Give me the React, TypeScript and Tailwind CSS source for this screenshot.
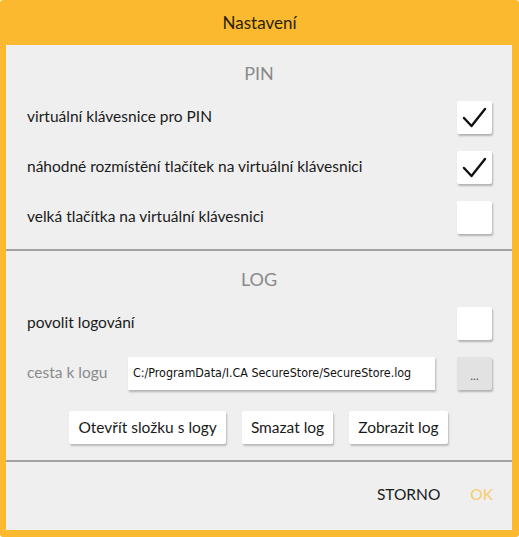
const Check = () => (
  <svg width="27" height="23" viewBox="0 0 27 23" fill="none">
    <path d="M3 12 L10.5 20 L24 3" stroke="#111" strokeWidth="2.4" strokeLinecap="round" strokeLinejoin="round" />
  </svg>
);

function Box({ checked = false }: { checked?: boolean }) {
  return (
    <div className="w-[35px] h-[33px] bg-white rounded-[2px] shadow-[1px_2px_2px_rgba(0,0,0,0.25)] flex items-center justify-center">
      {checked && <Check />}
    </div>
  );
}

function Row({ label, checked }: { label: string; checked?: boolean }) {
  return (
    <div className="flex items-center justify-between h-[50px] pl-[21px] pr-[20px]">
      <span className="text-[15.5px] text-[#1a1a1a]">{label}</span>
      <Box checked={checked} />
    </div>
  );
}

function Btn({ children }: { children: React.ReactNode }) {
  return (
    <button className="h-[33px] px-[9px] bg-white rounded-[2px] shadow-[1px_2px_2px_rgba(0,0,0,0.22)] text-[15.5px] text-[#1a1a1a]">
      {children}
    </button>
  );
}

function Heading({ children }: { children: React.ReactNode }) {
  return (
    <div className="h-[47px] pt-[9px] flex items-center justify-center text-[18px] text-[#8a8a8a]">{children}</div>
  );
}

export default function App() {
  return (
    <div className="w-[519px] h-[537px] bg-[#fbb92f] rounded-[3px] flex flex-col font-['Lato',sans-serif]">
      <div className="h-[45px] flex items-center justify-center text-[17px] text-[#2a1f05]">Nastavení</div>
      <div className="flex-1 ml-[6px] mb-[7px] mr-[7px] bg-[#efefef] flex flex-col">
        <Heading>PIN</Heading>
        <div className="flex flex-col">
          <Row label="virtuální klávesnice pro PIN" checked />
          <Row label="náhodné rozmístění tlačítek na virtuální klávesnici" checked />
          <Row label="velká tlačítka na virtuální klávesnici" />
        </div>
        <div className="mt-[7px] h-[2px] bg-[#a3a3a3]" />
        <Heading>LOG</Heading>
        <Row label="povolit logování" />
        <div className="flex items-center h-[50px] pl-[21px] pr-[20px]">
          <span className="w-[101px] text-[15.5px] text-[#8a8a8a]">cesta k logu</span>
          <div className="w-[307px] h-[33px] bg-white shadow-[1px_2px_2px_rgba(0,0,0,0.25)] flex items-center pl-[5px] text-[12.4px] text-[#111] font-['DejaVu_Sans_Condensed','DejaVu_Sans',sans-serif]">
            C:/ProgramData/I.CA SecureStore/SecureStore.log
          </div>
          <div className="ml-auto w-[35px] h-[33px] bg-[#e2e2e2] rounded-[2px] shadow-[1px_2px_2px_rgba(0,0,0,0.25)] flex items-center justify-center text-[12px] text-[#555] pt-[6px]">
            ...
          </div>
        </div>
        <div className="flex justify-center gap-[16px] mt-[13px] pr-[1px]">
          <Btn>Otevřít složku s logy</Btn>
          <Btn>Smazat log</Btn>
          <Btn>Zobrazit log</Btn>
        </div>
        <div className="mt-[16px] h-[2px] bg-[#a3a3a3]" />
        <div className="flex-1 flex items-center justify-end gap-[30px] pr-[19px] pb-[2px] text-[15.5px]">
          <span className="text-[#1a1a1a]">STORNO</span>
          <span className="text-[#f7cc6a]">OK</span>
        </div>
      </div>
    </div>
  );
}
